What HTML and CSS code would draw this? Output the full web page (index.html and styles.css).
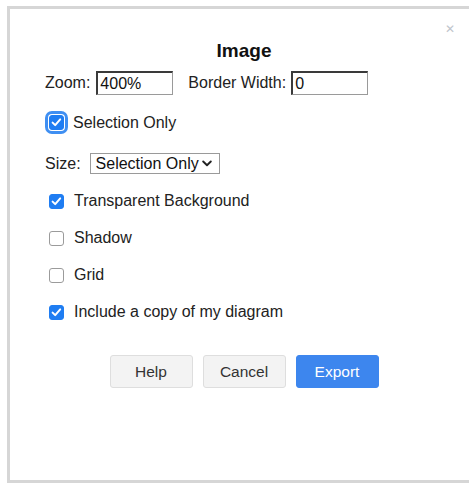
FILE: index.html
```html
<!DOCTYPE html>
<html>
<head>
<meta charset="utf-8">
<link rel="stylesheet" href="styles.css">
</head>
<body>
<div class="dialog">
  <span class="close">&#x2715;</span>
  <div class="title">Image</div>
  <div class="row row-zoom">
    <label class="lbl">Zoom:</label>
    <input class="field" type="text" value="400%">
    <label class="lbl lbl-border">Border Width:</label>
    <input class="field" type="text" value="0">
  </div>
  <div class="row row-sel">
    <span class="check check-focus"></span>
    <span class="opt-text">Selection Only</span>
  </div>
  <div class="row row-size">
    <label class="lbl">Size:</label>
    <div class="select">Selection Only
      <svg class="chev" width="10" height="7" viewBox="0 0 10 7"><path d="M1.2 1.5 L5 5.2 L8.8 1.5" fill="none" stroke="#222" stroke-width="1.9" stroke-linecap="round" stroke-linejoin="round"/></svg>
    </div>
  </div>
  <div class="options">
    <div class="row opt"><span class="check on"></span><span class="opt-text">Transparent Background</span></div>
    <div class="row opt"><span class="check"></span><span class="opt-text">Shadow</span></div>
    <div class="row opt"><span class="check"></span><span class="opt-text">Grid</span></div>
    <div class="row opt"><span class="check on"></span><span class="opt-text">Include a copy of my diagram</span></div>
  </div>
  <div class="buttons">
    <button class="btn">Help</button>
    <button class="btn">Cancel</button>
    <button class="btn btn-primary">Export</button>
  </div>
</div>
</body>
</html>
```

FILE: styles.css
```css
html, body {
  margin: 0;
  padding: 0;
  background: #fff;
  overflow: hidden;
}

body {
  font-family: "Liberation Sans", Arial, sans-serif;
  font-size: 16px;
  color: #222;
}

.dialog {
  position: relative;
  box-sizing: border-box;
  width: 474px;
  height: 477px;
  margin: 6px 0 0 7px;
  border: 3px solid #d6d6d6;
  padding: 0 0 0 35px;
}

.close {
  position: absolute;
  top: 13px;
  right: 23px;
  font-size: 12px;
  color: #c0c5cc;
}

.title {
  margin: 31px 0 0 -35px;
  text-align: center;
  font-weight: bold;
  font-size: 19px;
  line-height: 22px;
  color: #111;
}

.row {
  display: flex;
  align-items: center;
}

.row-zoom {
  height: 24px;
  margin-top: 9px;
}

.lbl {
  margin-right: 6px;
}

.lbl-border {
  margin-left: 15px;
  margin-right: 5px;
}

.field {
  box-sizing: border-box;
  width: 77px;
  height: 24px;
  margin: 0;
  padding: 0 2px;
  font: inherit;
  color: #111;
  border-style: solid;
  border-width: 2px 1px 1px 2px;
  border-color: #3a3a3a #9a9a9a #9a9a9a #3a3a3a;
  outline: none;
}

.row-sel {
  height: 21px;
  margin-top: 17px;
}

.check {
  box-sizing: border-box;
  flex: none;
  width: 15px;
  height: 15px;
  margin: 0 10px 0 4px;
  border: 1px solid #9b9b9b;
  border-radius: 3px;
  background: #fff;
}

.check.on,
.check-focus {
  border-color: #1f7df2;
  background: #1f7df2 url("data:image/svg+xml,%3Csvg xmlns='http://www.w3.org/2000/svg' width='15' height='15' viewBox='0 0 15 15'%3E%3Cpath d='M3.6 7.6 L6.2 10.1 L11.2 4.4' fill='none' stroke='white' stroke-width='2' stroke-linecap='round' stroke-linejoin='round'/%3E%3C/svg%3E") center / 15px 15px no-repeat;
}

.check-focus {
  margin: 0 9px 0 4px;
  box-shadow: 0 0 0 1px #fff, 0 0 0 4px #3f8ff2;
}

.row-size {
  height: 21px;
  margin-top: 20px;
}

.row-size .lbl {
  margin-right: 9px;
}

.select {
  box-sizing: border-box;
  display: flex;
  align-items: center;
  height: 21px;
  width: 130px;
  padding: 0 0 0 5px;
  border: 1px solid #9a9a9a;
  color: #111;
}

.chev {
  margin-left: 3px;
}

.options {
  display: flex;
  flex-direction: column;
  gap: 17px;
  margin-top: 17px;
}

.opt {
  height: 20px;
}

.buttons {
  display: flex;
  justify-content: center;
  gap: 10px;
  margin: 33px 0 0 -35px;
}

.btn {
  box-sizing: border-box;
  width: 83px;
  height: 33px;
  font: inherit;
  font-size: 15.5px;
  color: #333;
  background: #f3f3f3;
  border: 1px solid #dedede;
  border-radius: 3px;
}

.btn-primary {
  background: #3d86ee;
  border-color: #3d86ee;
  color: #fff;
}
```
